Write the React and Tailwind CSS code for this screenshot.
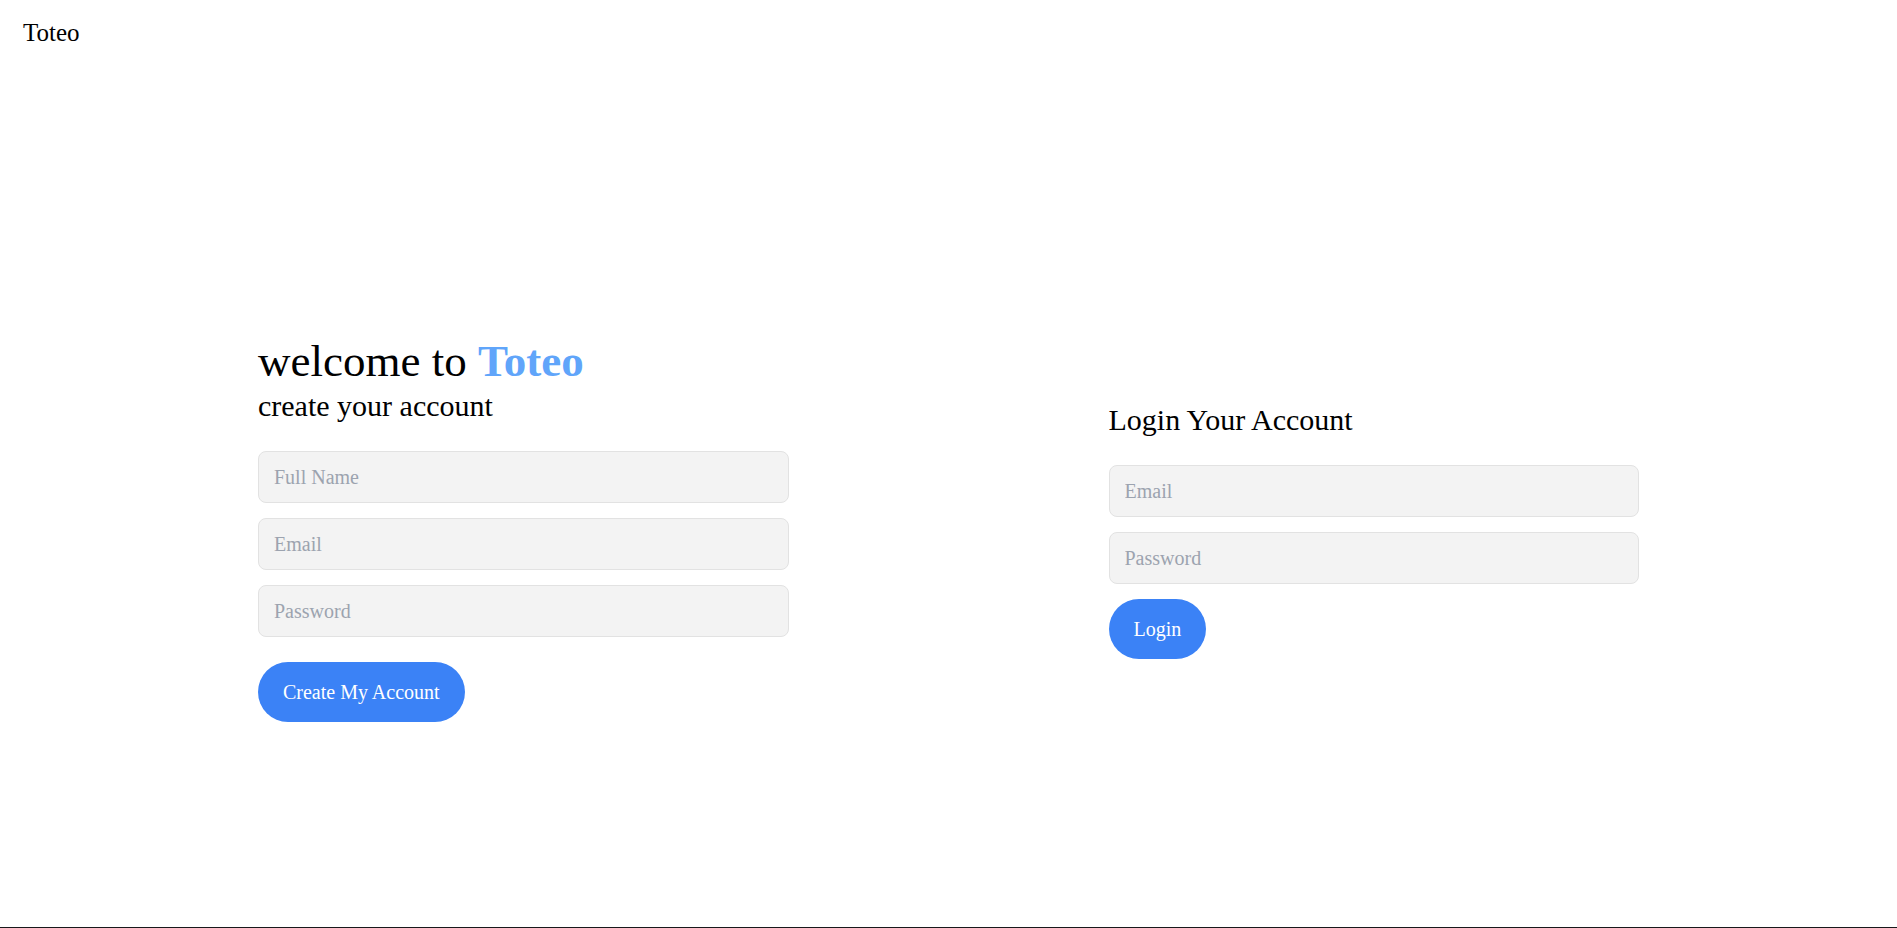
function Field({ id, label, type = "text" }) {
  return (
    <input
      id={id}
      name={id}
      type={type}
      aria-label={label}
      placeholder={label}
      className="block w-full rounded-lg border border-[#e2e2e2] bg-[#f3f3f3] px-[15px] py-[10px] text-[20px] leading-[30px] text-black placeholder:text-[#9ca3af] focus:outline-2 focus:outline-[#3b82f6]"
    />
  );
}

function SubmitButton({ children }) {
  return (
    <button
      type="submit"
      className="cursor-pointer rounded-full bg-[#3b82f6] px-[25px] py-[15px] text-[20px] leading-[30px] text-white"
    >
      {children}
    </button>
  );
}

export default function App() {
  return (
    <div className="flex min-h-screen flex-col border-b border-[#18181b] bg-white font-['Liberation_Serif',serif] text-black">
      <nav className="px-[23px] py-[15px]">
        <a href="#" className="block w-fit text-[25px] leading-[35px]">
          Toteo
        </a>
      </nav>

      <main className="flex flex-1 items-center gap-80 px-[13.6%] pt-[66px]">
        <section className="min-w-0 flex-1">
          <h1 className="text-[45px] leading-[50px]">
            welcome to <span className="font-bold text-[#60a5fa]">Toteo</span>
          </h1>
          <h2 className="text-[30px] leading-10">create your account</h2>
          <form className="mt-[25px]">
            <div className="flex flex-col gap-[15px]">
              <Field id="fullname" label="Full Name" />
              <Field id="signup-email" label="Email" type="email" />
              <Field id="signup-password" label="Password" type="password" />
            </div>
            <div className="mt-[25px] flex">
              <SubmitButton>Create My Account</SubmitButton>
            </div>
          </form>
        </section>

        <section className="min-w-0 flex-1">
          <h2 className="text-[30px] leading-10">Login Your Account</h2>
          <form className="mt-[25px]">
            <div className="flex flex-col gap-[15px]">
              <Field id="login-email" label="Email" type="email" />
              <Field id="login-password" label="Password" type="password" />
            </div>
            <div className="mt-[15px] flex">
              <SubmitButton>Login</SubmitButton>
            </div>
          </form>
        </section>
      </main>
    </div>
  );
}
